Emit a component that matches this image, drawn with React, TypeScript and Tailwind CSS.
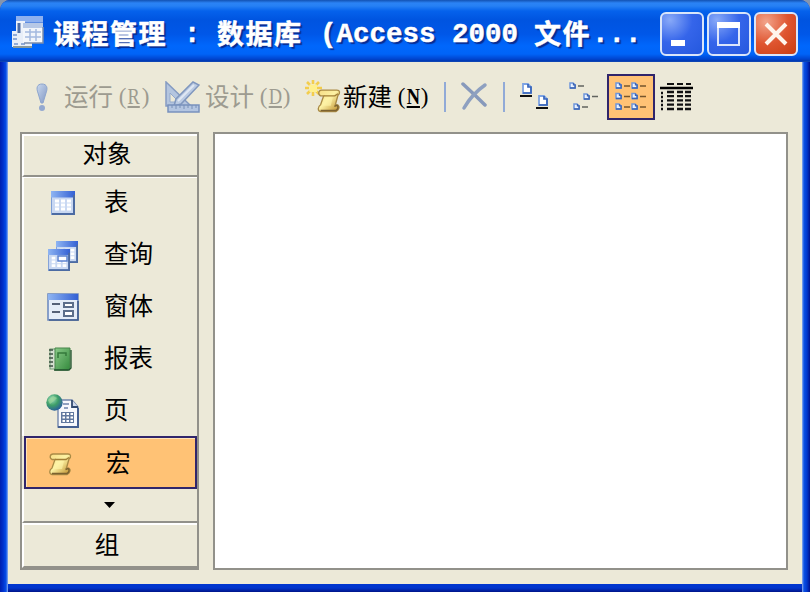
import React from "react";

const CJK = "font-['Noto_Sans_CJK_SC',sans-serif]";

function TableIcon({ x = 0, y = 0, w = 24, h = 24 }: { x?: number; y?: number; w?: number; h?: number }) {
  return (
    <svg x={x} y={y} width={w} height={h} viewBox="0 0 24 24" preserveAspectRatio="none">
      <rect x="0" y="0" width="24" height="24" fill="#7f9fd6" />
      <rect x="1" y="1" width="21" height="21" fill="#c9d8f2" />
      <rect x="0" y="0" width="24" height="6.500" fill="url(#blueBar)" />
      <path d="M4 10h4M10 10h4M16 10h4M4 14h4M10 14h4M16 14h4M4 18h4M10 18h4M16 18h4" stroke="#fff" strokeWidth="3" />
      <path d="M1 23h22V4" stroke="#4c6ba3" strokeWidth="2" fill="none" />
    </svg>
  );
}

function Defs() {
  return (
    <svg className="absolute h-0 w-0">
      <defs>
        <linearGradient id="blueBar" x1="0" x2="1" y1="0" y2="0">
          <stop offset="0" stopColor="#8fb5f2" />
          <stop offset="1" stopColor="#3360d4" />
        </linearGradient>
        <linearGradient id="gold" x1="0" x2="1" y1="0" y2="1">
          <stop offset="0" stopColor="#f6dc84" />
          <stop offset=".45" stopColor="#fdf2a4" />
          <stop offset="1" stopColor="#b98724" />
        </linearGradient>
        <linearGradient id="steel" x1="0" x2="1" y1="0" y2="1">
          <stop offset="0" stopColor="#c9d8ee" />
          <stop offset="1" stopColor="#8298c4" />
        </linearGradient>
        <linearGradient id="green" x1="0" x2="1" y1="0" y2="1">
          <stop offset="0" stopColor="#8acb89" />
          <stop offset="1" stopColor="#348a3d" />
        </linearGradient>
        <radialGradient id="globe" cx=".35" cy=".3" r=".75">
          <stop offset="0" stopColor="#9cdcc0" />
          <stop offset=".5" stopColor="#3f9f68" />
          <stop offset="1" stopColor="#285b9d" />
        </radialGradient>
      </defs>
    </svg>
  );
}

function AppIcon() {
  return (
    <svg width="34" height="34" viewBox="0 0 34 34">
      <rect x="5" y="1" width="27" height="26" fill="#5f8de2" />
      <rect x="5" y="1" width="27" height="6" fill="#8db0ef" />
      <rect x="5" y="6" width="9" height="16" fill="#eef2fa" />
      <rect x="1" y="16" width="20" height="16" fill="#e8eef8" />
      <path d="M2 20h4M2 24h4M3 29h4M10 29h4" stroke="#8faad8" strokeWidth="2" />
      <path d="M8 8v10" stroke="#4f6da5" strokeWidth="3" />
      <path d="M2 32h19" stroke="#87989a" strokeWidth="2" fill="none" />
      <rect x="12" y="9" width="20" height="19" fill="#f3f6fb" />
      <rect x="12" y="8" width="20" height="5" fill="#b7c8e6" />
      <path d="M14 17h16M14 22h16M19 14v12M25 14v12" stroke="#a4b9e0" strokeWidth="1.5" />
      <path d="M13 28h19V12" stroke="#7c8daa" strokeWidth="1.5" fill="none" />
    </svg>
  );
}

function ScrollShape() {
  return (
    <>
      <path d="M5 2h15c3 0 3.500 3 1 5l-2.500 9c4-.5 4.500 3 2.500 5l-2 1.500H4C1 22 1 18 4 16l3-8.500H4C1 6 2 2 5 2z" fill="url(#gold)" stroke="#a98a45" strokeWidth="1.3" />
      <path d="M7 7.500h11l3-2" stroke="#a17e35" strokeWidth="1.3" fill="none" />
      <path d="M4 21.500h15c2-1 3-4 1-5l-2.500 1" stroke="#7c6230" strokeWidth="1.5" fill="none" />
      <path d="M8 9h8l-2 8H6z" fill="#fdf3a8" opacity=".65" />
    </>
  );
}

function Scroll() {
  return (
    <svg width="24" height="24" viewBox="0 0 24 24">
      <ScrollShape />
    </svg>
  );
}

function NewIcon() {
  return (
    <svg width="36" height="34" viewBox="0 0 36 34">
      <path d="M2 2l3 3M8 0v4M14 2l-3 3M0 8h4M12 8h5M2 14l3-3M8 12v4M14 14l-3-3" stroke="#f3cd4c" strokeWidth="2.6" />
      <rect x="4.500" y="4.500" width="7.500" height="7.500" fill="#fff08d" />
      <g transform="translate(11.500 8) scale(1.02 1.05)">
        <ScrollShape />
      </g>
    </svg>
  );
}

function DesignIcon() {
  return (
    <svg width="35" height="33" viewBox="0 0 35 33">
      <path d="M1 1v24h25z" fill="#b4c5df" stroke="#859bc2" strokeWidth="1.5" />
      <path d="M5 12v9h9z" fill="#ece9d8" stroke="#94a9cc" />
      <path d="M28 1l6 3-18 19-7 2 2-7z" fill="#bbcbe3" stroke="#8097be" strokeWidth="1.5" />
      <path d="M29 4L13 20" stroke="#e0e8f3" strokeWidth="2" />
      <rect x="3" y="24" width="31" height="7" fill="#b3c5e1" stroke="#7891bd" strokeWidth="1.5" />
      <path d="M7 24v3M11 24v4M15 24v3M19 24v4M23 24v3M27 24v4M31 24v3" stroke="#7890b7" />
    </svg>
  );
}

function Page({ x, y }: { x: number; y: number }) {
  return (
    <g transform={`translate(${x} ${y})`}>
      <path d="M1 1h5l3 3v6H1z" fill="#fff" stroke="#7da3e3" strokeWidth="1.8" />
      <path d="M6 1v3h3v6H1" stroke="#3865bb" strokeWidth="1.7" fill="none" />
    </g>
  );
}

function SmallPage({ x, y }: { x: number; y: number }) {
  return (
    <g transform={`translate(${x} ${y})`}>
      <path d="M1 1h3l2 2v3H1z" fill="#eaf2ff" stroke="#6f97dc" strokeWidth="1.5" />
      <path d="M4.500 1v1.800h1.700V6H1" stroke="#3d65b4" strokeWidth="1.3" fill="none" />
    </g>
  );
}

function QueryIcon() {
  return (
    <svg width="32" height="32">
      <TableIcon x={9} y={1} w={22} h={22} />
      <TableIcon x={1} y={9} w={22} h={22} />
      <path d="M11 16h9v5h-9z" fill="#fff" stroke="#5c83d1" strokeWidth="1.5" />
    </svg>
  );
}

function FormIcon() {
  return (
    <svg width="32" height="28" viewBox="0 0 32 28">
      <rect x="1" y="1" width="30" height="26" fill="#e5edf8" stroke="#6785bd" strokeWidth="1.5" />
      <rect x="1" y="1" width="30" height="6" fill="url(#blueBar)" />
      <path d="M5 11h8M5 19h8" stroke="#26334c" strokeWidth="1.6" />
      <path d="M17 10h9v4h-9zM17 18h9v5h-9z" fill="#fff" stroke="#5c6e8b" strokeWidth="2" />
      <path d="M2 27h29V8" fill="none" stroke="#425d8c" strokeWidth="1.6" />
    </svg>
  );
}

function ReportIcon() {
  return (
    <svg width="24" height="24" viewBox="0 0 24 24">
      <rect x="1" y="2" width="7" height="20" fill="#d5dfd1" stroke="#6a9971" />
      <path d="M6 1h15v20l-2 2H6z" fill="url(#green)" stroke="#46854b" />
      <path d="M0 3h4M0 7h4M0 11h4M0 15h4M0 19h4" stroke="#3d5042" strokeWidth="1.7" />
      <path d="M9 11V6h8v3" fill="none" stroke="#347a3b" strokeWidth="1.5" />
      <path d="M5 23h15l2-2V3" stroke="#20522d" strokeWidth="1.3" fill="none" />
    </svg>
  );
}

function WebPageIcon() {
  return (
    <svg width="34" height="34" viewBox="0 0 34 34">
      <path d="M12 6h14l6 7v20H12z" fill="#f6f8fc" stroke="#7185ac" strokeWidth="1.4" />
      <path d="M26 6v7h6" fill="#d0dbed" stroke="#31496f" strokeWidth="1.8" />
      <path d="M17 10h6M18 14h4" stroke="#6d83ac" strokeWidth="1.5" />
      <rect x="15" y="18" width="13" height="11" fill="#60789f" />
      <path d="M16.500 20h2.500M20.500 20h2.500M24.500 20h2.500M16.500 23.500h2.500M20.500 23.500h2.500M24.500 23.500h2.500M16.500 27h2.500M20.500 27h2.500M24.500 27h2.500" stroke="#fff" strokeWidth="2" />
      <path d="M12 33h20V14" fill="none" stroke="#445f91" strokeWidth="2" />
      <circle cx="8.500" cy="8.500" r="8.200" fill="url(#globe)" />
      <path d="M2 6l5-4 4 2-3 3-4 3z" fill="#9dd699" opacity=".7" />
    </svg>
  );
}

function MenuText({ text, letter, disabled }: { text: string; letter: string; disabled?: boolean }) {
  return (
    <div className={`flex h-[32px] items-center ${disabled ? "text-[#9d9b90]" : "text-black"}`}>
      <span className={`${CJK} -mt-[3px] w-[54px] text-[24.5px] leading-[32px]`}>{text}</span>
      <span className="flex w-[35px] font-['Liberation_Serif',serif] text-[23px] leading-[32px]">
        <span className="w-[9px] text-center">(</span>
        <span className={`flex w-[14px] justify-center ${disabled ? "" : "font-bold"}`}>
          <span className="inline-block scale-x-[.8] underline underline-offset-2">{letter}</span>
        </span>
        <span className="w-[9px] text-center">)</span>
      </span>
    </div>
  );
}

function WindowButton({ kind }: { kind: "min" | "max" | "close" }) {
  const tone =
    kind === "close"
      ? "bg-[radial-gradient(circle_at_25%_20%,#f2a38a,#df5530_50%,#c83c12)]"
      : "bg-[radial-gradient(circle_at_20%_15%,#88a9f8,#3565ea_48%,#2458de)]";
  return (
    <div className={`h-[44px] w-[44px] rounded-[6px] border-2 border-[#d9e5fa] ${tone}`}>
      <svg width="40" height="40" viewBox="0 0 40 40">
        {kind === "min" && <rect x="9" y="26" width="14" height="6" fill="#fff" />}
        {kind === "max" && (
          <>
            <rect x="9" y="9" width="21" height="22" fill="none" stroke="#dbe5fb" strokeWidth="2" />
            <rect x="8" y="8" width="23" height="6" fill="#fff" />
          </>
        )}
        {kind === "close" && <path d="M10 10l20 20M30 10L10 30" stroke="#fff5ec" strokeWidth="4" />}
      </svg>
    </div>
  );
}

function TitleBar() {
  return (
    <header className="flex h-[62px] items-start rounded-t-[10px] bg-[linear-gradient(180deg,#1251b2_0px,#2b83f5_3px,#2680f4_6px,#0562ec_11px,#0054e0_20px,#0057e8_34px,#0067fc_46px,#0064f8_54px,#0045d0_59px,#0038b0_61px,#1a50b8_62px)] pl-[11px]">
      <div className="mt-[15px] w-[42px]"><AppIcon /></div>
      <div className={`mt-[13px] flex h-[40px] w-[607px] whitespace-pre text-[27px] leading-[39px] font-bold text-white [-webkit-text-stroke:0.5px_#fff] [text-shadow:2px_2px_1px_#082c91] ${CJK}`}>
        <span className="w-[114px] tracking-[1.5px]">课程管理</span>
        <span className="mt-[3px] w-[50px] text-center font-['Liberation_Mono',monospace]">:</span>
        <span className="w-[103px] tracking-[1.5px]">数据库</span>
        <span className="mt-[2px] w-[214px] font-['Liberation_Mono',monospace] text-[27.5px]">(Access 2000 </span>
        <span className="w-[58px] tracking-[1.5px]">文件</span>
        <span className="mt-[2px] font-['Liberation_Mono',monospace] text-[27.5px]">...</span>
      </div>
      <div className="mt-[12px] flex gap-[3px]">
        <WindowButton kind="min" />
        <WindowButton kind="max" />
        <WindowButton kind="close" />
      </div>
    </header>
  );
}

function Toolbar() {
  const rows = [0, 1, 2];
  return (
    <div className="flex h-[70px] items-center pl-[27px]">
      <svg width="14" height="29" viewBox="0 0 14 29">
        <path d="M7 1C2 1 1 5 3 10l3 10h2l3-10c2-5 1-9-4-9z" fill="url(#steel)" stroke="#8da5ce" />
        <circle cx="7" cy="25" r="3" fill="#94a9d0" />
      </svg>
      <div className="ml-[15px]"><MenuText text="运行" letter="R" disabled /></div>
      <div className="ml-[12px]"><DesignIcon /></div>
      <div className="ml-[5px]"><MenuText text="设计" letter="D" disabled /></div>
      <div className="ml-[11px]"><NewIcon /></div>
      <div className="ml-[2px]"><MenuText text="新建" letter="N" /></div>
      <div className="ml-[12px] h-[30px] w-[2px] bg-[#91aad7]" />
      <svg className="ml-[14px]" width="28" height="30" viewBox="0 0 28 30">
        <path d="M3 2q12 11 22 21" fill="none" stroke="#8799bb" strokeWidth="3.5" strokeLinecap="round" />
        <path d="M25 3Q12 12 4 26" fill="none" stroke="#8ea0c0" strokeWidth="3.5" strokeLinecap="round" />
      </svg>
      <div className="ml-[15px] h-[30px] w-[2px] bg-[#91aad7]" />
      <svg className="ml-[15px]" width="30" height="30" viewBox="0 0 30 30">
        <Page x={2} y={1} /><path d="M0 14h12" stroke="#111" strokeWidth="2" />
        <Page x={18} y={13} /><path d="M16 26h12" stroke="#111" strokeWidth="2" />
      </svg>
      <svg className="ml-[18px]" width="31" height="30" viewBox="0 0 31 30">
        <SmallPage x={1} y={0} /><SmallPage x={15} y={11} /><SmallPage x={5} y={21} />
        <path d="M10 4h6M24 14.500h6M14 25h6" stroke="#62645f" strokeWidth="1.5" />
      </svg>
      <div className="ml-[8px] flex h-[46px] w-[48px] items-center justify-center border-2 border-[#30256b] bg-[#ffc275]">
        <svg width="34" height="30" viewBox="0 0 34 30">
          {rows.map((r) => (
            <g key={r}>
              <SmallPage x={1} y={r * 10.5} /><SmallPage x={17} y={r * 10.5} />
              <path d={`M10 ${4 + r * 10.5}h6M26 ${4 + r * 10.5}h6`} stroke="#76552d" strokeWidth="1.6" />
            </g>
          ))}
        </svg>
      </div>
      <svg className="ml-[5px]" width="34" height="30" viewBox="0 0 34 30">
        <path d="M7 2h7M17 2h6M26 2h5" stroke="#111" strokeWidth="2" />
        <path d="M0 6h33" stroke="#000" strokeWidth="2.5" />
        <path d="M1 11h2M1 15h2M1 19h2M1 23h2M1 27h2M7 10h7M17 10h6M25 10h6M7 14.200h7M17 14.200h6M25 14.200h6M7 18.400h7M17 18.400h6M25 18.400h6M7 22.600h7M17 22.600h6M25 22.600h6M7 27h7M17 27h6M25 27h6" stroke="#111" strokeWidth="2.3" />
      </svg>
    </div>
  );
}

function NavItem({ icon, label }: { icon: React.ReactNode; label: string }) {
  return (
    <div className="flex h-[51.800px] items-center pl-[22px]">
      <div className="flex w-[34px] justify-center">{icon}</div>
      <span className={`-mt-[5px] ml-[24px] text-[24.500px] leading-[32px] ${CJK}`}>{label}</span>
    </div>
  );
}

function Sidebar() {
  return (
    <aside className={`flex h-[438px] w-[179px] flex-col border-2 border-[#92918a] text-black ${CJK}`}>
      <div className="flex h-[43px] items-center justify-center border-t-2 border-l-2 border-white border-b-2 border-b-[#92918a] pr-[7px] pb-[5px] text-[24.5px] leading-[32px]">对象</div>
      <div className="h-[259px] border-l-2 border-t border-white">
        <NavItem icon={<svg width="25" height="25"><TableIcon /></svg>} label="表" />
        <NavItem icon={<QueryIcon />} label="查询" />
        <NavItem icon={<FormIcon />} label="窗体" />
        <NavItem icon={<div className="mr-[5px]"><ReportIcon /></div>} label="报表" />
        <NavItem icon={<WebPageIcon />} label="页" />
      </div>
      <div className="ml-[2px] flex h-[53px] w-[173px] items-center border-2 border-[#30256b] bg-[#ffc275] pl-[22px] inset-shadow-[1px_1px_0_#ffe3b8]">
        <div className="mt-[3px]"><Scroll /></div>
        <span className="-mt-[1px] ml-[34px] text-[24.5px] leading-[32px]">宏</span>
      </div>
      <div className="flex h-[34px] items-center justify-center border-b-2 border-l-2 border-b-[#92918a] border-l-white pr-[2px]">
        <svg width="12" height="8"><path d="M0 1h11L5.500 7z" fill="#000" /></svg>
      </div>
      <div className="flex h-[45px] items-center justify-center border-2 border-white border-r-0 border-b-[#92918a] pr-[7px] pb-[4px] text-[24.5px] leading-[32px]">组</div>
    </aside>
  );
}

export default function App() {
  return (
    <main className="h-[592px] w-[810px] overflow-hidden bg-[#8595ae]">
      <Defs />
      <div className="h-[592px] rounded-t-[10px] bg-[linear-gradient(180deg,#0036d0_584px,#0034cc_588px,#001489_592px)]">
        <TitleBar />
        <div className="flex h-[530px] bg-[linear-gradient(90deg,#001fae_0px,#0030cc_3px,#064ee8_6px,#8eafef_8px,transparent_8px,transparent_802px,#91afeb_802px,#0a51e5_804px,#0037cc_807px,#00108b_810px)] px-[8px]">
          <div className="h-[522px] w-[794px] bg-[#ece9d8]">
            <Toolbar />
            <div className="flex gap-[14px] pl-[12px]">
              <Sidebar />
              <section className="h-[438px] w-[575px] border-2 border-[#92918a] bg-white" />
            </div>
          </div>
        </div>
      </div>
    </main>
  );
}
